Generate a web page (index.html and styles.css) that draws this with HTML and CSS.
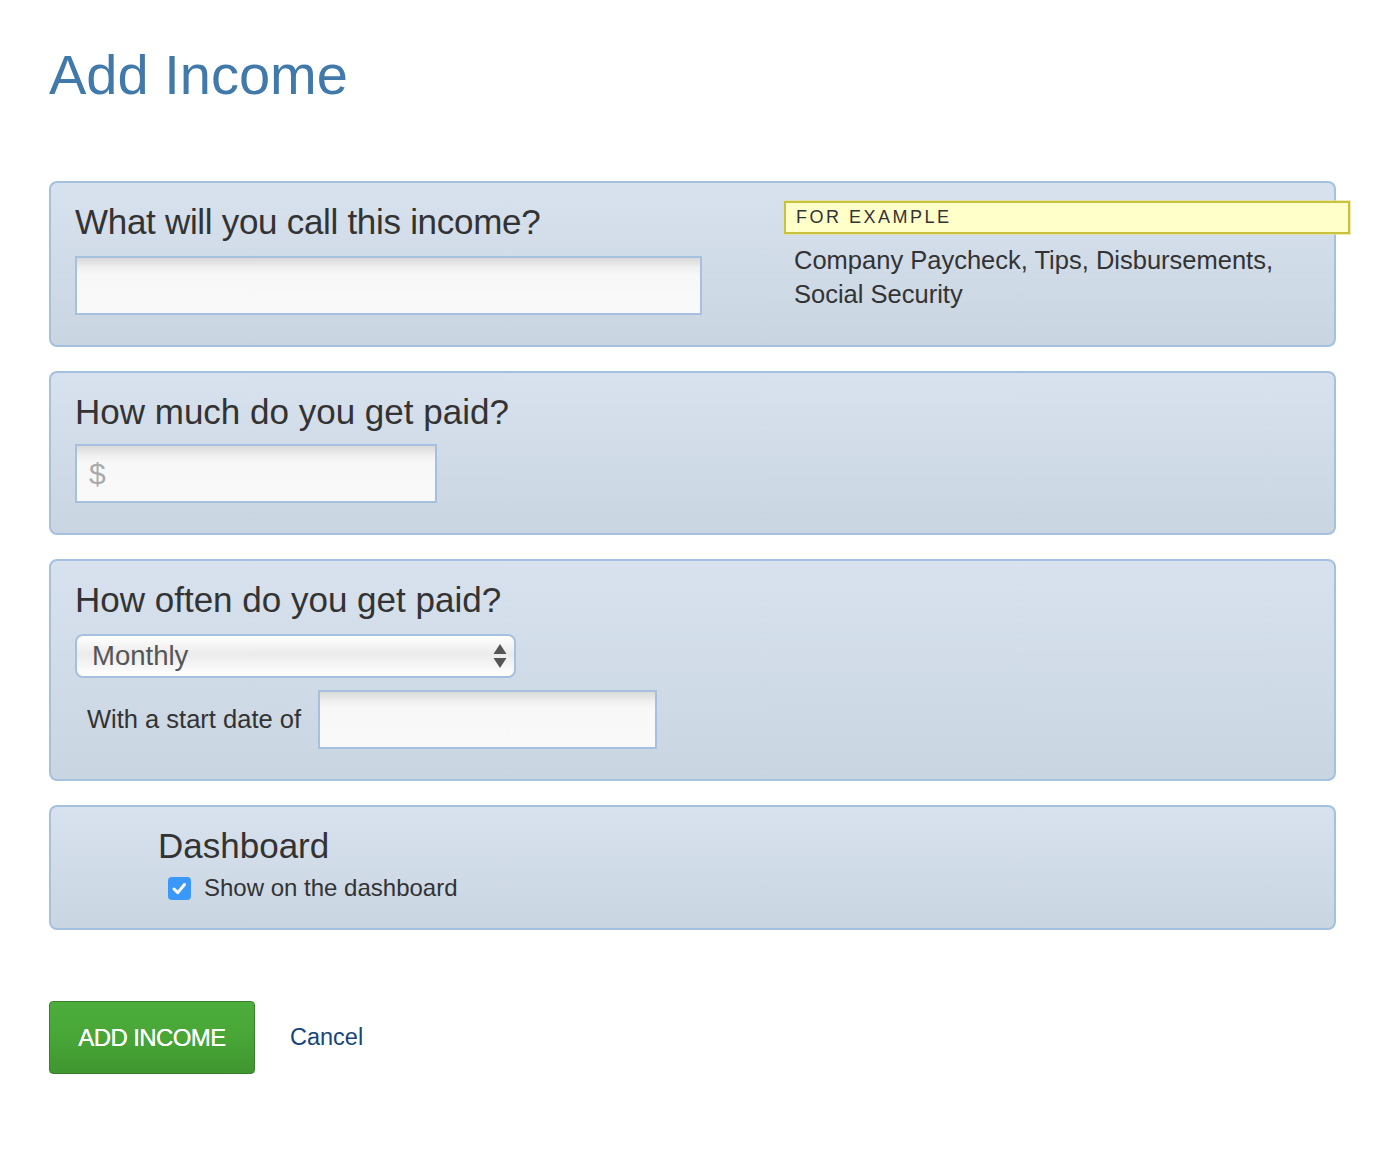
FILE: index.html
```html
<!DOCTYPE html>
<html lang="en">
<head>
<meta charset="utf-8">
<title>Add Income</title>
<link rel="stylesheet" href="styles.css">
</head>
<body>
<main class="page">
  <h1 class="title">Add Income</h1>

  <section class="panel panel-name">
    <div class="col-main">
      <h2 class="q q-name">What will you call this income?</h2>
      <input class="field field-name" type="text">
    </div>
    <aside class="example">
      <div class="example-tag">FOR EXAMPLE</div>
      <p class="example-text">Company Paycheck, Tips, Disbursements, Social Security</p>
    </aside>
  </section>

  <section class="panel panel-amount">
    <h2 class="q">How much do you get paid?</h2>
    <input class="field field-amount" type="text" placeholder="$">
  </section>

  <section class="panel panel-often">
    <h2 class="q">How often do you get paid?</h2>
    <div class="select">
      <span class="select-value">Monthly</span>
      <svg class="select-arrows" width="14" height="28" viewBox="0 0 14 28"><path d="M7 2 L13.5 12 H0.5 Z M7 26 L13.5 16 H0.5 Z" fill="#555"/></svg>
    </div>
    <div class="date-row">
      <label class="date-label">With a start date of</label>
      <input class="field field-date" type="text">
    </div>
  </section>

  <section class="panel panel-dash">
    <h2 class="q q-dash">Dashboard</h2>
    <label class="check-row">
      <span class="checkbox"><svg width="23" height="23" viewBox="0 0 23 23"><path d="M6 12 L9.8 15.6 L16.5 7.5" fill="none" stroke="#fff" stroke-width="3" stroke-linecap="round" stroke-linejoin="round"/></svg></span>
      <span class="check-text">Show on the dashboard</span>
    </label>
  </section>

  <div class="actions">
    <button class="btn-add" type="button">ADD INCOME</button>
    <a class="cancel" href="#">Cancel</a>
  </div>
</main>
</body>
</html>
```

FILE: styles.css
```css
* { box-sizing: border-box; }
html, body { margin: 0; padding: 0; background: #fff; }
body {
  font-family: "Liberation Sans", Arial, Helvetica, sans-serif;
  color: #333;
}
.page {
  width: 1336px;
  padding: 0 0 60px 49px;
}
.title {
  margin: 0;
  padding-top: 40px;
  height: 181px;
  font-size: 56px;
  line-height: 70px;
  font-weight: normal;
  color: #4079aa;
}
.panel {
  width: 1287px;
  border: 2px solid #a6c0df;
  border-radius: 8px;
  background: linear-gradient(#d7e2ee, #cad5e2);
  padding: 19px 24px 30px 24px;
  margin-bottom: 24px;
}
.q {
  margin: 0 0 14px 0;
  font-size: 35px;
  line-height: 40px;
  font-weight: normal;
  color: #333;
}
.q-name { letter-spacing: -0.3px; }
.panel-name {
  display: flex;
  align-items: flex-start;
}
.col-main { flex: 0 0 627px; }
.field {
  display: block;
  height: 59px;
  border: 2px solid #a6c0df;
  border-radius: 0;
  background: linear-gradient(#d9d9d9 0, #f1f1f1 10px, #f8f8f8 18px, #f9f9f9 100%);
  font-family: inherit;
  font-size: 28px;
  padding: 0 12px;
  color: #333;
  outline: none;
}
.field-name { width: 627px; }
.example {
  flex: 0 0 566px;
  margin-left: 82px;
  margin-top: -1px;
}
.example-tag {
  height: 33px;
  border: 2px solid #c9c23c;
  box-shadow: 0 0 0 1px rgba(230, 226, 150, 0.7);
  background: #ffffca;
  font-size: 18px;
  line-height: 29px;
  letter-spacing: 2.5px;
  color: #333;
  padding-left: 10px;
}
.example-text {
  margin: 9px 0 0 10px;
  font-size: 25.5px;
  line-height: 34px;
  color: #333;
  width: 520px;
}
.panel-amount .q { margin-bottom: 12px; }
.field-amount {
  width: 362px;
  height: 59px;
  font-size: 30px;
}
.field-amount::placeholder { color: #aaa; }
.panel-often { padding-bottom: 30px; }
.select {
  width: 441px;
  height: 44px;
  border: 2px solid #a6c0df;
  border-radius: 8px;
  background: linear-gradient(#ffffff 0, #ebebeb 45%, #ffffff 100%);
  display: flex;
  align-items: center;
  justify-content: space-between;
  padding: 0 7px 0 15px;
  margin-top: 0;
}
.select-value {
  font-size: 27.5px;
  color: #555;
}
.select-arrows { display: block; }
.date-row {
  display: flex;
  align-items: center;
  margin-top: 12px;
}
.date-label {
  font-size: 25.5px;
  color: #333;
  padding-left: 12px;
  width: 243px;
  white-space: nowrap;
}
.field-date {
  width: 339px;
  height: 59px;
}
.panel-dash {
  padding: 19px 24px 26px 107px;
}
.q-dash { margin-bottom: 8px; }
.check-row {
  display: flex;
  align-items: center;
  padding-left: 10px;
}
.checkbox {
  width: 23px;
  height: 23px;
  border-radius: 4px;
  background: #3b98fb;
  display: inline-block;
  margin-right: 13px;
}
.checkbox svg { display: block; }
.check-text {
  font-size: 24px;
  color: #333;
}
.actions {
  display: flex;
  align-items: center;
  margin-top: 71px;
}
.btn-add {
  width: 206px;
  height: 73px;
  border: 1px solid #3a7f2c;
  border-radius: 4px;
  background: linear-gradient(#4cad3b 0, #48a637 50%, #3f962f 100%);
  color: #fff;
  font-family: inherit;
  font-size: 24px;
  letter-spacing: -0.6px;
  text-shadow: 0 0 0.6px #fff;
  padding: 0;
  cursor: pointer;
}
.cancel {
  margin-left: 35px;
  font-size: 23.5px;
  color: #16457a;
  text-decoration: none;
}
```
